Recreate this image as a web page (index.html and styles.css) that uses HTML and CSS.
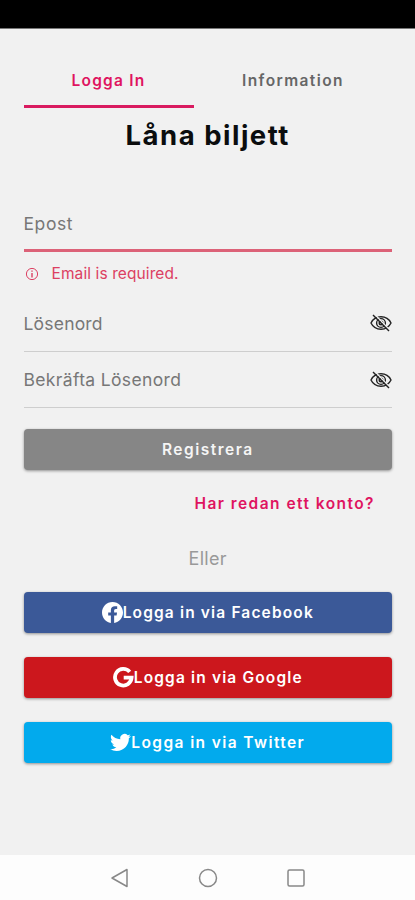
FILE: index.html
```html
<!DOCTYPE html>
<html lang="sv">
<head>
<meta charset="utf-8">
<meta name="viewport" content="width=device-width, initial-scale=1">
<title>Låna biljett</title>
<link rel="stylesheet" href="styles.css">
</head>
<body>
<div class="status"></div>
<main class="page">
  <nav class="tabs">
    <a class="tab active"><span class="t-login">Logga In</span></a>
    <a class="tab"><span class="t-info">Information</span></a>
  </nav>
  <h1><span>Låna biljett</span></h1>
  <form>
    <div class="field invalid"><label class="l-mail">Epost</label></div>
    <div class="error">
      <svg width="14" height="14" viewBox="0 0 14 14" fill="none" stroke="currentColor"><circle cx="7" cy="7" r="5.6"/><path d="M7 6v4.5M7 3.5v1.3" stroke-width="1.4"/></svg>
      <span>Email is required.</span>
    </div>
    <div class="field"><label class="l-pass">Lösenord</label>
      <svg class="eye" viewBox="0 0 22 18" fill="none" stroke="currentColor"><path d="M1 9c4-8.3 16-8.3 20 0c-4 8.300-16 8.300-20 0z"/><circle cx="11" cy="9" r="4.400"/><circle cx="11" cy="9" r="1.800"/><path class="gap" d="M4.500 0l15 16"/><path d="M3 1l16 16"/></svg>
    </div>
    <div class="field second"><label class="l-confirm">Bekräfta Lösenord</label>
      <svg class="eye" viewBox="0 0 22 18" fill="none" stroke="currentColor"><path d="M1 9c4-8.3 16-8.3 20 0c-4 8.300-16 8.300-20 0z"/><circle cx="11" cy="9" r="4.400"/><circle cx="11" cy="9" r="1.800"/><path class="gap" d="M4.500 0l15 16"/><path d="M3 1l16 16"/></svg>
    </div>
    <button type="button" class="btn register"><span>Registrera</span></button>
  </form>
  <div class="account"><a>Har redan ett konto?</a></div>
  <p class="or">Eller</p>
  <div class="social">
    <button class="btn facebook"><svg width="21" height="21" viewBox="0 0 24 24" fill="currentColor"><path d="M24 12.073C24 5.405 18.627 0 12 0S0 5.405 0 12.073C0 18.100 4.388 23.094 10.125 24v-8.437H7.078v-3.490h3.047v-2.660c0-3.025 1.792-4.697 4.533-4.697 1.312 0 2.686.236 2.686.236v2.971H15.830c-1.491 0-1.956.930-1.956 1.886v2.264h3.328l-.532 3.490h-2.796V24C19.612 23.094 24 18.100 24 12.073z"/></svg><span>Logga in via Facebook</span></button>
    <button class="btn google"><svg width="21" height="21" viewBox="0 0 21 21" fill="none" stroke="currentColor" stroke-width="3.800"><path d="M16.700 4.900A8.300 8.300 0 1 0 18.600 10.700H10.700"/></svg><span>Logga in via Google</span></button>
    <button class="btn twitter"><svg width="21" height="21" viewBox="0 0 24 24" fill="currentColor"><path d="M23.953 4.570a10 10 0 0 1-2.825.775 4.958 4.958 0 0 0 2.163-2.723 9.900 9.900 0 0 1-3.127 1.184 4.920 4.920 0 0 0-8.384 4.482C7.690 8.095 4.067 6.130 1.640 3.162a4.820 4.820 0 0 0-.666 2.475c0 1.710.870 3.213 2.188 4.096a4.900 4.900 0 0 1-2.228-.616v.060a4.923 4.923 0 0 0 3.946 4.827 4.996 4.996 0 0 1-2.212.085 4.936 4.936 0 0 0 4.604 3.417A9.867 9.867 0 0 1 0 19.540a13.995 13.995 0 0 0 7.557 2.209c9.053 0 13.998-7.496 13.998-13.985 0-.210 0-.420-.015-.630A9.935 9.935 0 0 0 24 4.590z"/></svg><span>Logga in via Twitter</span></button>
  </div>
</main>
<footer class="navbar">
  <svg width="20" height="20" viewBox="0 0 20 20"><path d="M17 1.500v17L2 10z"/></svg>
  <svg width="20" height="20" viewBox="0 0 20 20"><circle cx="10" cy="10" r="8.500"/></svg>
  <svg width="20" height="20" viewBox="0 0 20 20"><rect x="2" y="2" width="16" height="16" rx="1.500"/></svg>
</footer>
</body>
</html>
```
FILE: styles.css
```css
* { box-sizing: border-box; }
body {
  margin: 0;
  height: 900px;
  display: flex;
  flex-direction: column;
  background: #f1f1f1;
  font-family: Inter, Roboto, "Liberation Sans", sans-serif;
  overflow: hidden;
}
svg { display: block; flex: none; }
.status { height: 29px; background: #000; border-bottom: 1px solid #777; }
.page { flex: 1; padding: 23px 23px 0 23.5px; }
.tabs { display: flex; height: 56px; }
.tab {
  width: 170px;
  padding-top: 3px;
  display: flex;
  align-items: center;
  justify-content: center;
  border-bottom: 3px solid transparent;
  font-size: 15.5px;
  font-weight: 600;
  color: #666;
}
.tab.active { color: #df1460; border-color: #d91b60; }
.t-login { letter-spacing: 1.2px; }
.t-info { letter-spacing: 1.4px; margin-left: 29px; }
h1 {
  margin: 7px 0 0;
  height: 40px;
  line-height: 40px;
  font-size: 27.5px;
  font-weight: 700;
  letter-spacing: 1.5px;
  text-align: center;
  color: #0b0d0e;
}
.field {
  height: 57px;
  display: flex;
  align-items: center;
  justify-content: space-between;
  border-bottom: 1px solid #cecece;
  font-size: 17.5px;
  color: #777;
}
.field.invalid { height: 54px; margin-top: 43px; border-bottom: 3px solid #dc6278; }
.field.second { height: 56px; }
.l-mail { letter-spacing: .6px; }
.l-pass { letter-spacing: .2px; }
.l-confirm { letter-spacing: .35px; }
.eye { width: 22px; height: 18px; color: #222; stroke-width: 1.4; }
.eye .gap { stroke: #f1f1f1; }
.error {
  height: 43px;
  padding-left: 1px;
  display: flex;
  align-items: center;
  gap: 13px;
  color: #dc4062;
  font-size: 15.5px;
  letter-spacing: .1px;
}
.btn {
  width: 100%;
  height: 41px;
  padding: 0;
  border: 0;
  border-radius: 4px;
  display: flex;
  align-items: center;
  justify-content: center;
  color: #fff;
  font-family: inherit;
  font-size: 15.5px;
  font-weight: 600;
  box-shadow: 0 1px 3px rgba(0, 0, 0, .4);
}
.register { margin-top: 21px; background: #868686; color: #f5f5f5; letter-spacing: 1.5px; }
.account {
  height: 66px;
  line-height: 67px;
  padding-right: 17px;
  text-align: right;
  font-size: 15.5px;
  font-weight: 600;
  letter-spacing: 1.45px;
  color: #df1460;
}
.or { margin: 0; height: 55.5px; line-height: 45px; text-align: center; font-size: 18px; color: #999; letter-spacing: .3px; }
.social { display: grid; gap: 24px; }
.facebook { background: #3b5998; letter-spacing: 1.15px; }
.google { background: #cc171d; letter-spacing: 1.15px; }
.twitter { background: #02aaed; letter-spacing: 1.4px; }
.navbar {
  height: 45px;
  display: flex;
  align-items: center;
  justify-content: center;
  gap: 68px;
  background: #fdfdfd;
}
.navbar svg { fill: none; stroke: #888; stroke-width: 1.5; stroke-linejoin: round; }
```
